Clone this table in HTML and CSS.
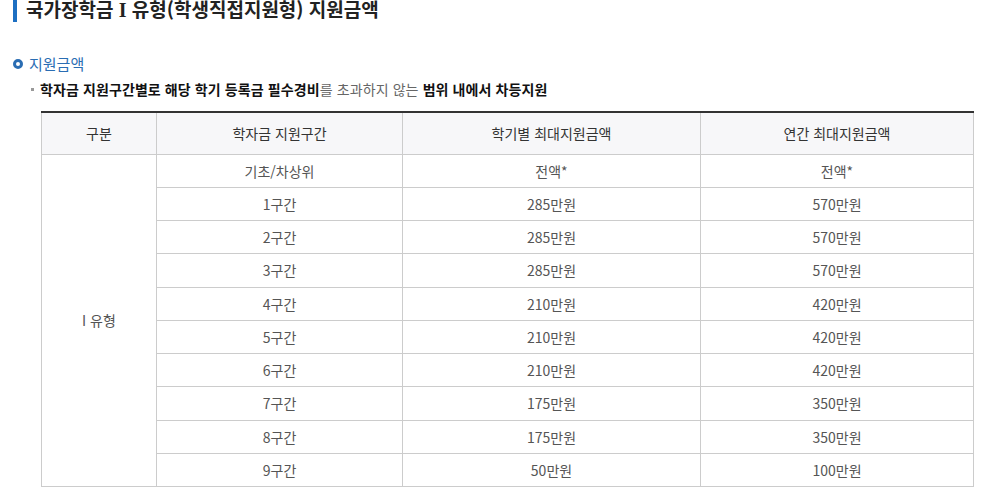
FILE: index.html
```html
<!DOCTYPE html>
<html lang="ko">
<head>
<meta charset="utf-8">
<link rel="stylesheet" href="styles.css">
</head>
<body>
<div class="page">
  <h1 class="title">국가장학금 <span class="roman">I</span> 유형(학생직접지원형) 지원금액</h1>
  <h2 class="sub"><span class="ring"></span>지원금액</h2>
  <p class="bullet"><span class="sq"></span><span><b>학자금 지원구간별로 해당 학기 등록금 필수경비</b>를 초과하지 않는 <b>범위 내에서 차등지원</b></span></p>
  <table class="tbl">
    <colgroup>
      <col class="c1"><col class="c2"><col class="c3"><col class="c4">
    </colgroup>
    <thead>
      <tr><th>구분</th><th>학자금 지원구간</th><th>학기별 최대지원금액</th><th>연간 최대지원금액</th></tr>
    </thead>
    <tbody>
      <tr><td rowspan="10">I 유형</td><td>기초/차상위</td><td>전액*</td><td>전액*</td></tr>
      <tr><td>1구간</td><td>285만원</td><td>570만원</td></tr>
      <tr><td>2구간</td><td>285만원</td><td>570만원</td></tr>
      <tr><td>3구간</td><td>285만원</td><td>570만원</td></tr>
      <tr><td>4구간</td><td>210만원</td><td>420만원</td></tr>
      <tr><td>5구간</td><td>210만원</td><td>420만원</td></tr>
      <tr><td>6구간</td><td>210만원</td><td>420만원</td></tr>
      <tr><td>7구간</td><td>175만원</td><td>350만원</td></tr>
      <tr><td>8구간</td><td>175만원</td><td>350만원</td></tr>
      <tr><td>9구간</td><td>50만원</td><td>100만원</td></tr>
    </tbody>
  </table>
</div>
</body>
</html>
```

FILE: styles.css
```css
* { box-sizing: border-box; }
html, body { margin: 0; padding: 0; background: #fff; }
body {
  font-family: "Noto Sans CJK KR", "Noto Sans", sans-serif;
  color: #333;
  overflow: hidden;
}
.page { padding-left: 13px; }
.title {
  margin: -3px 0 0 0;
  padding-left: 9px;
  border-left: 4px solid #1d6fc2;
  font-size: 19px;
  line-height: 24px;
  font-weight: 700;
  color: #222;
}
.roman { font-family: "Liberation Serif", serif; font-size: 20px; }
.sub {
  margin: 31px 0 0 0;
  display: flex;
  align-items: center;
  font-size: 15px;
  line-height: 22px;
  font-weight: 400;
  color: #2a6db3;
}
.ring {
  width: 10px;
  height: 10px;
  border: 3px solid #2a6db3;
  border-radius: 50%;
  margin-right: 6px;
}
.bullet {
  margin: 4px 0 0 18px;
  display: flex;
  align-items: center;
  font-size: 14px;
  line-height: 20px;
  color: #666;
  letter-spacing: 0.1px;
}
.bullet b { color: #111; font-weight: 700; }
.sq {
  width: 3px;
  height: 3px;
  background: #999;
  margin-right: 6px;
}
.tbl {
  margin: 12px 0 0 28px;
  width: 932px;
  border-collapse: collapse;
  border-top: 2px solid #333;
  font-size: 14px;
  table-layout: fixed;
}
.c1 { width: 115px; }
.c2 { width: 246px; }
.c3 { width: 298px; }
.c4 { width: 273px; }
.tbl th, .tbl td {
  border: 1px solid #ccc;
  text-align: center;
  padding: 0;
}
.tbl th {
  height: 42px;
  background: #f7f7f9;
  font-weight: 400;
  color: #333;
}
.tbl td {
  height: 33px;
  color: #555;
}
.tbl tr:nth-child(4n) td { height: 34px; }
```
